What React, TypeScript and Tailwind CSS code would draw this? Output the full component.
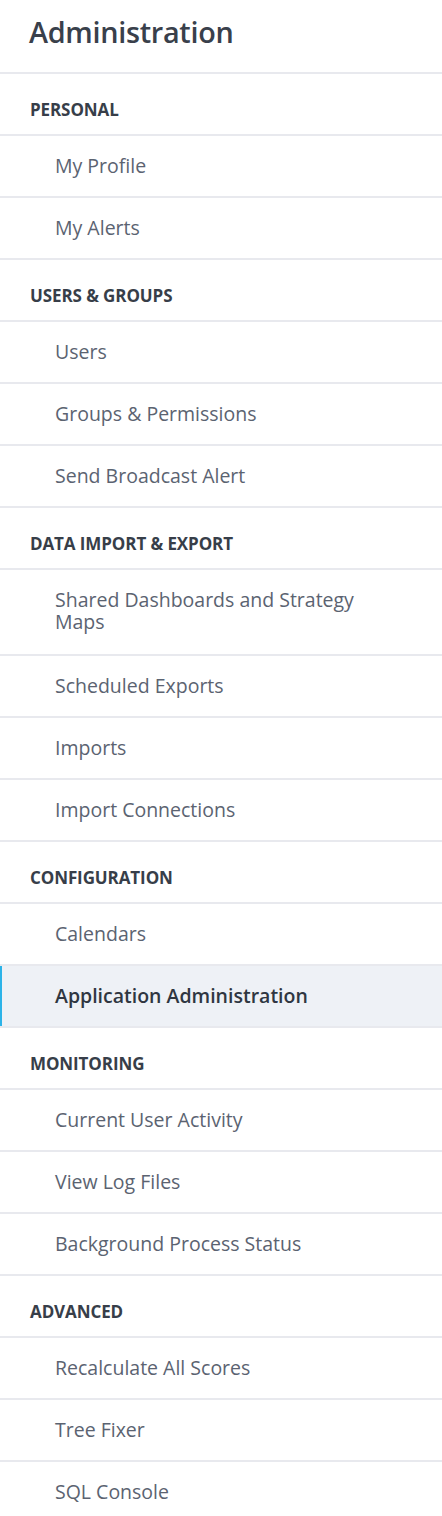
import React from "react";

type Item = { label: string; active?: boolean; wrap?: boolean };
type Section = { title: string; items: Item[] };

const sections: Section[] = [
  { title: "Personal", items: [{ label: "My Profile" }, { label: "My Alerts" }] },
  {
    title: "Users & Groups",
    items: [{ label: "Users" }, { label: "Groups & Permissions" }, { label: "Send Broadcast Alert" }],
  },
  {
    title: "Data Import & Export",
    items: [
      { label: "Shared Dashboards and Strategy Maps", wrap: true },
      { label: "Scheduled Exports" },
      { label: "Imports" },
      { label: "Import Connections" },
    ],
  },
  {
    title: "Configuration",
    items: [{ label: "Calendars" }, { label: "Application Administration", active: true }],
  },
  {
    title: "Monitoring",
    items: [{ label: "Current User Activity" }, { label: "View Log Files" }, { label: "Background Process Status" }],
  },
  {
    title: "Advanced",
    items: [{ label: "Recalculate All Scores" }, { label: "Tree Fixer" }, { label: "SQL Console" }],
  },
];

const SectionHeader = ({ title }: { title: string }) => (
  <div className="h-[62px] border-b-2 border-[#e8e9ee] pl-[30px] pt-[26px]">
    <span className="block text-[17px] leading-[20px] font-bold uppercase tracking-[-0.1px] text-[#373e49]">
      {title}
    </span>
  </div>
);

const NavItem = ({ label, active, wrap }: Item) => (
  <a
    href="#"
    className={
      "relative block border-b-2 border-[#e8e9ee] pl-[55px] pr-[70px] text-[19.5px] leading-[22px] " +
      (wrap ? "pt-[19px] pb-[21px] " : "py-[19px] ") +
      (active ? "bg-[#eef1f6] font-semibold text-[#2f3641]" : "text-[#5b6371]")
    }
  >
    {active && <span className="absolute left-0 top-0 bottom-0 w-[2px] bg-[#2cb3e8]" />}
    {label}
  </a>
);

export default function App() {
  return (
    <div
      className="w-[442px] min-h-[1516px] bg-white"
      style={{ fontFamily: '"Open Sans", "Noto Sans", sans-serif' }}
    >
      <div className="h-[74px] border-b-2 border-[#e8e9ee] pl-[29px] pt-[13px]">
        <h1 className="text-[28.8px] leading-[38px] font-semibold tracking-[-0.3px] text-[#39404b]">Administration</h1>
      </div>
      <nav>
        {sections.map((s) => (
          <div key={s.title}>
            <SectionHeader title={s.title} />
            {s.items.map((it) => (
              <NavItem key={it.label} {...it} />
            ))}
          </div>
        ))}
      </nav>
    </div>
  );
}
